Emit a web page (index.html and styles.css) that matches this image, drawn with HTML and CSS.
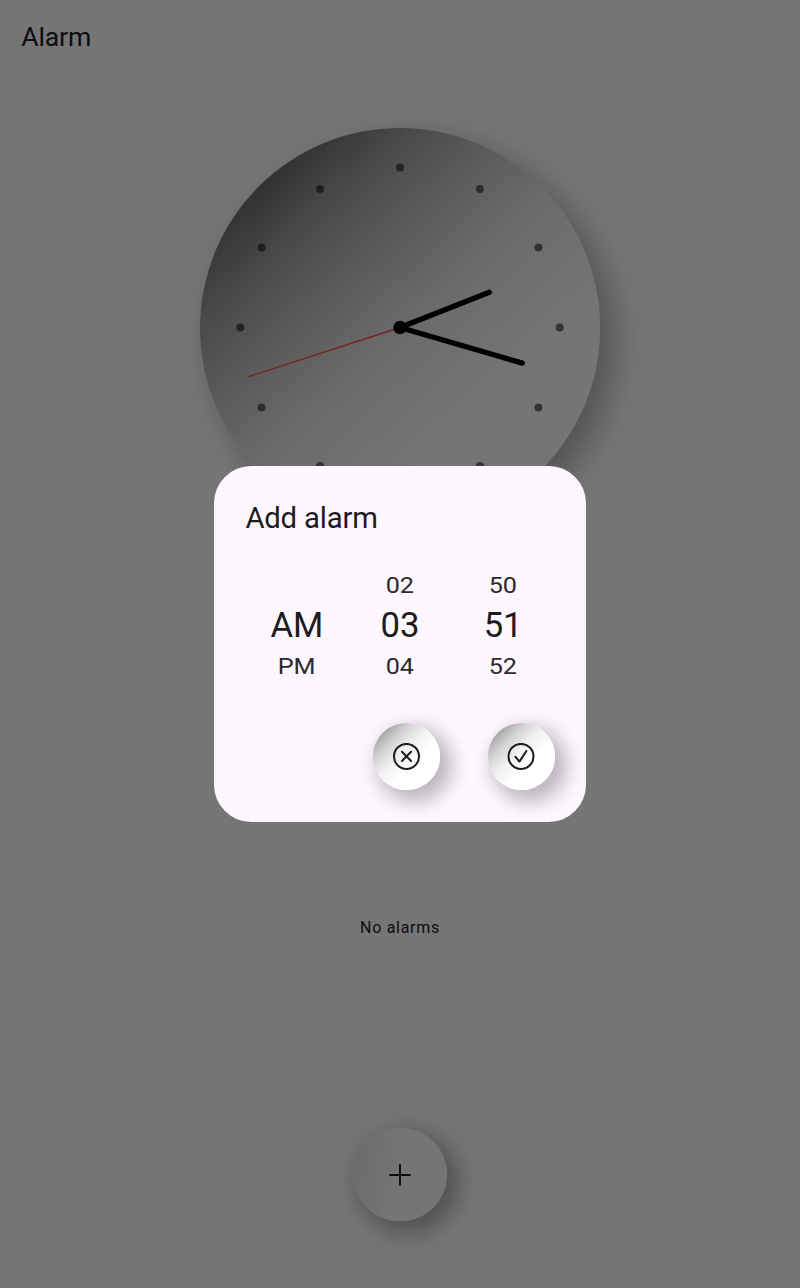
FILE: index.html
```
<!DOCTYPE html>
<html lang="en">
<head>
<meta charset="utf-8">
<title>Alarm</title>
<link rel="stylesheet" href="styles.css">
</head>
<body>
<main class="screen">
  <h1 class="title">Alarm</h1>
  <div class="clock">
    <svg class="face" viewBox="-200 -199.5 400 400">
      <g class="marks">
        <circle cx="0" cy="-160" r="4"/><circle cx="79.9" cy="-138.4" r="4"/><circle cx="138.4" cy="-80" r="4"/>
        <circle cx="159.7" cy="0" r="4"/><circle cx="138.4" cy="80" r="4"/><circle cx="79.9" cy="138.4" r="4"/>
        <circle cx="0" cy="160" r="4"/><circle cx="-79.9" cy="138.4" r="4"/><circle cx="-138.4" cy="80" r="4"/>
        <circle cx="-159.7" cy="0" r="4"/><circle cx="-138.4" cy="-80" r="4"/><circle cx="-79.9" cy="-138.4" r="4"/>
      </g>
      <path class="second" d="M0 0L-152.3 49.4"/>
      <path class="hand" d="M0 0L89.3 -35.3M0 0L122.3 35.6"/>
      <circle r="6.7"/>
    </svg>
  </div>
  <p class="empty">No alarms</p>
  <button class="round add" aria-label="Add">
    <svg class="plus" viewBox="0 0 22 22"><path d="M11 1V21M1 11H21"/></svg>
  </button>
</main>
<div class="overlay">
  <section class="dialog">
    <h2 class="heading">Add alarm</h2>
    <div class="wheels">
      <div class="wheel period"><span class="side"></span><span class="now">AM</span><span class="side">PM</span></div>
      <div class="wheel"><span class="side">02</span><span class="now">03</span><span class="side">04</span></div>
      <div class="wheel minute"><span class="side">50</span><span class="now">51</span><span class="side">52</span></div>
    </div>
    <div class="actions">
      <button class="round act" aria-label="Cancel">
        <svg class="icon" viewBox="0.5 0.6 28 28"><circle cx="14" cy="14" r="12.5"/><path d="M9.4 9.4L18.6 18.6M18.6 9.4L9.4 18.6"/></svg>
      </button>
      <button class="round act" aria-label="Confirm">
        <svg class="icon" viewBox="0 0.6 28 28"><circle cx="14" cy="14" r="12.5"/><path d="M8.3 14.3L12.4 19.2L19.4 8.6"/></svg>
      </button>
    </div>
  </section>
</div>
</body>
</html>
```
FILE: styles.css
```
* { box-sizing: border-box; }
body { margin: 0; font-family: Roboto, sans-serif; color: #0e0d0f; }
h1, h2, p { margin: 0; font-weight: 400; }
.screen {
  height: 1288px;
  background: #757575;
  display: flex;
  flex-direction: column;
  align-items: center;
  overflow: hidden;
}
.title {
  align-self: flex-start;
  padding: 19px 0 0 21.3px;
  height: 75px;
  font-size: 26.67px;
  line-height: 37px;
  letter-spacing: -.2px;
}
.clock {
  width: 400px;
  height: 400px;
  margin-top: 52.5px;
  flex: none;
  border-radius: 50%;
  background: linear-gradient(137deg, #2c2c2c 0%, #333 15%, #494949 25%, #595959 36%, #6b6b6b 51%, #757575 70%);
  box-shadow: 13.3px 13.3px 30px 2px rgba(0, 0, 0, .27);
}
.face { display: block; width: 400px; height: 400px; }
.marks { fill: rgba(0, 0, 0, .54); }
.hand { stroke: #000; stroke-width: 5.33; stroke-linecap: round; }
.second { stroke: #7a221c; stroke-width: 1.33; }
.empty {
  margin-top: 388px;
  font-size: 16px;
  line-height: 24px;
  letter-spacing: .7px;
}
.round { border: 0; padding: 0; border-radius: 50%; display: grid; place-items: center; flex: none; }
.add {
  width: 93.3px;
  height: 93.3px;
  margin-top: 188.5px;
  background: linear-gradient(97deg, #6b6b6b 0%, #707070 25%, #757575 50%);
  box-shadow: 8px 8px 22px 4px rgba(0, 0, 0, .3);
}
.plus { width: 22px; height: 22px; stroke: #0e0d0f; stroke-width: 2; stroke-linecap: round; }
.overlay { position: absolute; inset: 0; height: 1288px; display: grid; place-items: center; }
.dialog {
  width: 372.4px;
  height: 355.6px;
  padding: 32px 31.5px 32px 31.6px;
  border-radius: 37.3px;
  background: #fef7ff;
  color: #1d1b20;
}
.heading { font-size: 29.3px; line-height: 40px; letter-spacing: -.2px; }
.wheels { display: flex; height: 133px; margin-top: 20px; }
.wheel { flex: 1; display: flex; flex-direction: column; align-items: center; padding-top: 6.5px; }
.wheel span { height: 40.5px; line-height: 40.5px; }
.now { font-size: 34.7px; }
.side { font-size: 24.7px; color: #2b292e; transform: translateY(.2px) scale(1.02, .91); }
.actions { display: flex; justify-content: flex-end; gap: 48px; margin-top: 32px; }
.act {
  width: 66.7px;
  height: 66.7px;
  color: #1d1b20;
  background: linear-gradient(135deg, #8c8c8c 0%, #a9a9a9 15%, #d2d2d2 28%, #f2f2f2 45%, #fff 62%);
  box-shadow: 8px 8px 19px 4px rgba(0, 0, 0, .27);
}
.icon { width: 28px; height: 28px; fill: none; stroke: currentColor; stroke-width: 2; stroke-linecap: round; stroke-linejoin: round; }
```
